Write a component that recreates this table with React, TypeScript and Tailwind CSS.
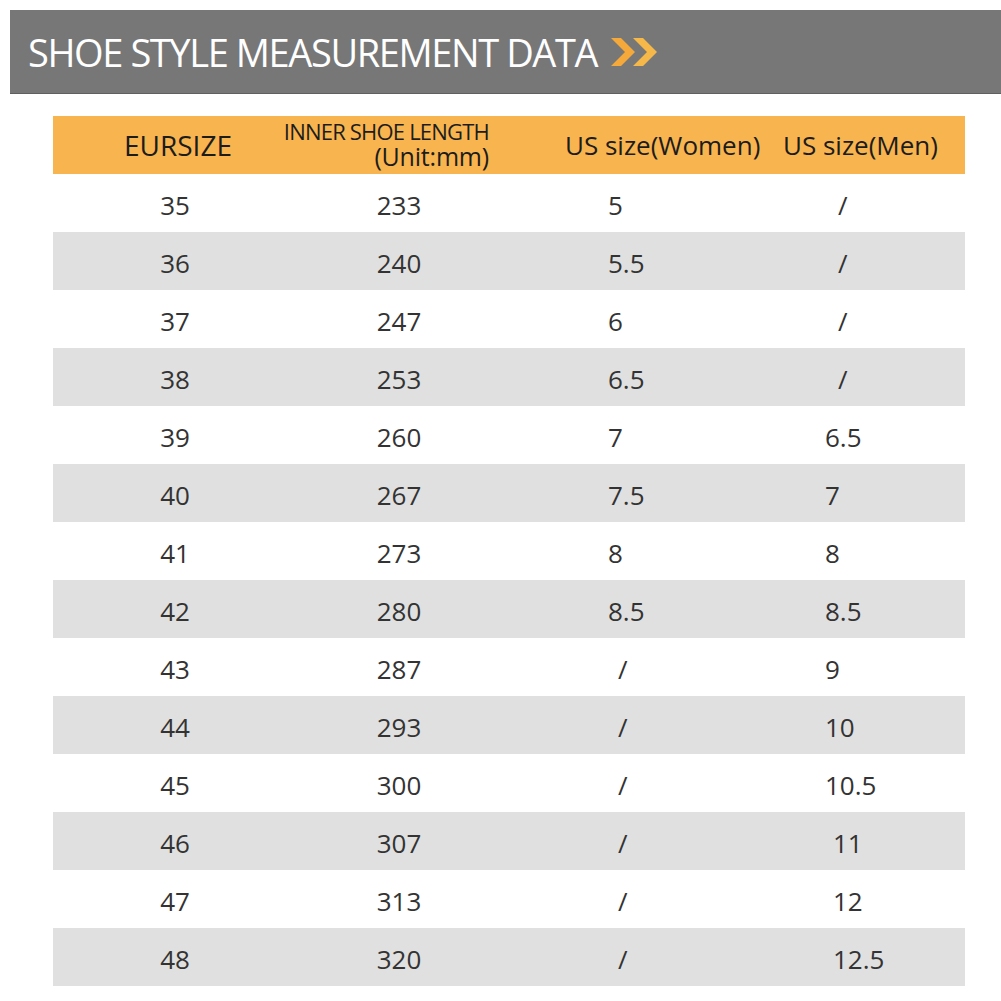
import React from 'react';

const rows = [
  { eu: '35', mm: '233', women: '5', men: '/' },
  { eu: '36', mm: '240', women: '5.5', men: '/' },
  { eu: '37', mm: '247', women: '6', men: '/' },
  { eu: '38', mm: '253', women: '6.5', men: '/' },
  { eu: '39', mm: '260', women: '7', men: '6.5' },
  { eu: '40', mm: '267', women: '7.5', men: '7' },
  { eu: '41', mm: '273', women: '8', men: '8' },
  { eu: '42', mm: '280', women: '8.5', men: '8.5' },
  { eu: '43', mm: '287', women: '/', men: '9' },
  { eu: '44', mm: '293', women: '/', men: '10' },
  { eu: '45', mm: '300', women: '/', men: '10.5' },
  { eu: '46', mm: '307', women: '/', men: '11' },
  { eu: '47', mm: '313', women: '/', men: '12' },
  { eu: '48', mm: '320', women: '/', men: '12.5' },
];

function Chevrons() {
  return (
    <svg width="52" height="32" viewBox="0 0 52 32" className="ml-[14px]">
      <polygon points="0,2 10,2 24,16 10,30 0,30 14,16" fill="#f4a93a" />
      <polygon points="22,2 32,2 46,16 32,30 22,30 36,16" fill="#f7b84a" />
    </svg>
  );
}

export default function App() {
  return (
    <div className="w-[1001px] h-[1001px] bg-white overflow-hidden font-['Open_Sans',sans-serif] text-[#333]">
      {/* Banner */}
      <div className="mt-[10px] ml-[10px] h-[84px] bg-[#777777] flex items-center pl-[18px] border-b border-[#5f5f5f]">
        <h1 className="text-white text-[38px] leading-none tracking-[-1.4px]">
          SHOE STYLE MEASUREMENT DATA
        </h1>
        <Chevrons />
      </div>

      {/* Table */}
      <div className="mt-[22px] ml-[53px] w-[912px]">
        <div className="h-[58px] bg-[#f8b44f] flex items-center text-[#1c1c1c]">
          <div className="w-[230px] pl-[71px] text-[28px] font-medium">EURSIZE</div>
          <div className="w-[282px] flex flex-col items-end pr-[76px] whitespace-nowrap">
            <span className="text-[22px] leading-[23px] tracking-[-0.8px]">INNER SHOE LENGTH</span>
            <span className="text-[25px] leading-[27px] font-medium tracking-[-0.2px]">(Unit:mm)</span>
          </div>
          <div className="w-[218px] text-[26px] font-medium">US size(Women)</div>
          <div className="flex-1 text-[26px] font-medium">US size(Men)</div>
        </div>

        {rows.map((r, i) => (
          <div
            key={r.eu}
            className={`h-[58px] flex items-center pt-[4px] text-[26px] ${i % 2 === 1 ? 'bg-[#e0e0e0]' : 'bg-white'}`}
          >
            <div className="w-[244px] text-center">{r.eu}</div>
            <div className="w-[204px] text-center">{r.mm}</div>
            <div className={`w-[274px] ${r.women === '/' ? 'pl-[117px]' : 'pl-[107px]'}`}>{r.women}</div>
            <div className={`flex-1 ${r.men === '/' ? 'pl-[63px]' : i >= 11 ? 'pl-[58px]' : 'pl-[50px]'}`}>{r.men}</div>
          </div>
        ))}
      </div>
    </div>
  );
}
